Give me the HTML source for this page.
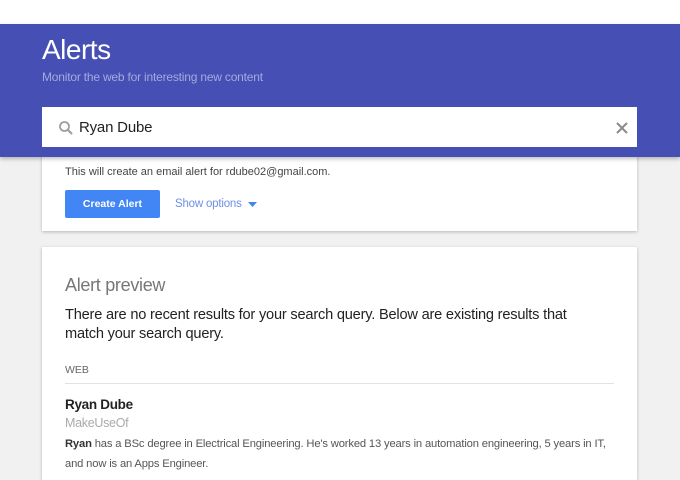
<!DOCTYPE html>
<html style="overflow:hidden;width:680px;height:480px"><head><style>
*{margin:0;padding:0;box-sizing:border-box}
body{width:680px;height:480px;overflow:hidden;background:#f1f1f1;font-family:"Liberation Sans",sans-serif;position:relative}
.a{position:absolute;white-space:nowrap}
</style></head><body>
<div class="a" style="left:0;top:0;width:680px;height:24px;background:#fff"></div>
<div class="a" style="left:42px;top:147px;width:595px;height:84px;background:#fff;box-shadow:0 1px 3px rgba(0,0,0,.25)"></div>
<div class="a" style="left:0;top:24px;width:680px;height:133px;background:#4650b4;box-shadow:0 2px 4px rgba(0,0,0,.25)"></div>
<div class="a" style="left:42px;top:34px;font-size:28px;color:#fff;letter-spacing:-0.5px">Alerts</div>
<div class="a" style="left:42px;top:70px;font-size:12px;color:#a4aade;letter-spacing:-0.2px">Monitor the web for interesting new content</div>
<div class="a" style="left:42px;top:107px;width:595px;height:40px;background:#fff"></div>
<svg class="a" style="left:58px;top:120px" width="16" height="16" viewBox="0 0 16 16"><circle cx="6.5" cy="6.5" r="4.5" fill="none" stroke="#9e9e9e" stroke-width="1.8"/><path d="M10 10l4 4" stroke="#9e9e9e" stroke-width="2.2"/></svg>
<div class="a" style="left:79px;top:119px;font-size:15px;color:#222;letter-spacing:-0.2px">Ryan Dube</div>
<svg class="a" style="left:616px;top:122px" width="12" height="12" viewBox="0 0 12 12"><path d="M1 1l10 10M11 1L1 11" stroke="#8a8a8a" stroke-width="2"/></svg>
<div class="a" style="left:65px;top:166px;font-size:11px;color:#444">This will create an email alert for rdube02@gmail.com.</div>
<div class="a" style="left:65px;top:190px;width:95px;height:28px;background:#4285f4;border-radius:2px;color:#fff;font-size:10.5px;font-weight:bold;text-align:center;line-height:28px">Create Alert</div>
<div class="a" style="left:175px;top:198px;font-size:11.5px;color:#6f8fe8;letter-spacing:-0.2px">Show options</div>
<svg class="a" style="left:248px;top:202px" width="9" height="6"><path d="M0 0h9L4.5 5z" fill="#4285f4"/></svg>
<div class="a" style="left:42px;top:247px;width:595px;height:233px;background:#fff;box-shadow:0 1px 3px rgba(0,0,0,.25)"></div>
<div class="a" style="left:65px;top:275px;font-size:18px;color:#777;letter-spacing:-0.3px">Alert preview</div>
<div class="a" style="left:65px;top:306px;font-size:14.6px;color:#222;line-height:19px;letter-spacing:-0.2px">There are no recent results for your search query. Below are existing results that<br>match your search query.</div>
<div class="a" style="left:65px;top:364px;font-size:10.5px;color:#666">WEB</div>
<div class="a" style="left:65px;top:383px;width:549px;height:1px;background:#e2e2e2"></div>
<div class="a" style="left:65px;top:397px;font-size:13.5px;font-weight:bold;color:#222;letter-spacing:-0.3px">Ryan Dube</div>
<div class="a" style="left:65px;top:416px;font-size:12.5px;color:#aaa;letter-spacing:-0.3px">MakeUseOf</div>
<div class="a" style="left:65px;top:434px;font-size:11.2px;color:#555;line-height:20px;letter-spacing:-0.15px"><b style="color:#333">Ryan</b> has a BSc degree in Electrical Engineering. He's worked 13 years in automation engineering, 5 years in IT,<br>and now is an Apps Engineer.</div>
</body></html>
